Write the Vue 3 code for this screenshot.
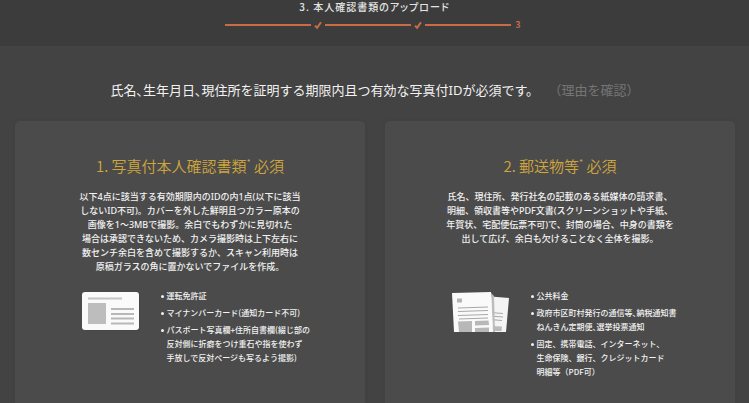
<template>
  <div class="page">
    <!-- Step header -->
    <header class="step-header">
      <h1 class="step-title">3. 本人確認書類のアップロード</h1>
      <div class="steps">
        <template v-for="step in 3" :key="step">
          <span class="step-line" />
          <svg v-if="step < 3" class="step-mark" viewBox="0 0 8 8">
            <path d="M1 4.6 L3.1 6.8 L7 1.2" />
          </svg>
          <span v-else class="step-mark">{{ step }}</span>
        </template>
      </div>
    </header>

    <main class="content">
      <p class="lead">
        <span class="compact">氏名、生年月日、</span>現住所を証明する期限内且つ有効な写真付IDが必須です。
        <a href="#" class="reason-link">（理由を確認）</a>
      </p>

      <div class="cards">
        <section v-for="card in cards" :key="card.title" class="card">
          <h2 class="card-title">{{ card.title }}<sup>*</sup> 必須</h2>
          <p class="card-text">{{ card.text.join('\n') }}</p>

          <div class="card-detail">
            <!-- ID card -->
            <svg v-if="card.icon === 'id'" class="card-icon" viewBox="0 0 58 44">
              <rect x="2" y="4" width="57" height="38" rx="3" fill="#3f3f3f" opacity="0.5" />
              <rect x="0" y="3" width="57" height="38" rx="3" fill="#fafafa" />
              <path d="M6 9.5H40" stroke="#c4c4c4" stroke-width="2" />
              <rect x="6" y="14" width="18" height="21" fill="#bdbdbd" />
              <path d="M29 20H52M29 25H52M29 29.5H52M29 34.5H52" stroke="#b8b8b8" stroke-width="2" />
            </svg>

            <!-- Letters -->
            <svg v-else class="card-icon" viewBox="0 0 58 44">
              <path d="M33 7 L57 9 L54 43 L30 43 Z" fill="#f4f4f4" />
              <path d="M38 23.5L51 24.5M38 27L51 28M38 30.5L50 31.5" stroke="#a8a8a8" />
              <path d="M38 37L50 37.5L49.5 42H38Z" fill="#bbb" />
              <path d="M39 4L41 43H43L42 7Z" fill="#bcbcbc" />
              <path d="M0 4 L39 3 L41 43 L2 43 Z" fill="#fafafa" />
              <path d="M5 9.5H10V13.5H5Z" fill="#b4b4b4" />
              <path d="M6 19L36 18M6 22.5L36 21.5M6 26.5L36 25.5M7 30L36 29" stroke="#a8a8a8" />
              <path d="M6 32.5L20 32V43H7ZM23 32L36.5 31.5L37 36L23 36.5ZM23 39L37 38.5V43H23Z" fill="#b8b8b8" />
            </svg>

            <ul class="card-list">
              <li v-for="item in card.items" :key="item[0]">{{ item.join('\n') }}</li>
            </ul>
          </div>
        </section>
      </div>
    </main>
  </div>
</template>

<script setup>
const cards = [
  {
    title: '1. 写真付本人確認書類',
    icon: 'id',
    text: [
      '以下4点に該当する有効期限内のIDの内1点(以下に該当',
      'しないID不可)。カバーを外した鮮明且つカラー原本の',
      '画像を1〜3MBで撮影。余白でもわずかに見切れた',
      '場合は承認できないため、カメラ撮影時は上下左右に',
      '数センチ余白を含めて撮影するか、スキャン利用時は',
      '原稿ガラスの角に置かないでファイルを作成。'
    ],
    items: [
      ['運転免許証'],
      ['マイナンバーカード(通知カード不可)'],
      ['パスポート写真欄+住所自書欄(綴じ部の', '反対側に折癖をつけ重石や指を使わず', '手放しで反対ページも写るよう撮影)']
    ]
  },
  {
    title: '2. 郵送物等',
    icon: 'mail',
    text: [
      '氏名、現住所、発行社名の記載のある紙媒体の請求書、',
      '明細、領収書等やPDF文書(スクリーンショットや手紙、',
      '年賀状、宅配便伝票不可)で、封筒の場合、中身の書類を',
      '出して広げ、余白も欠けることなく全体を撮影。'
    ],
    items: [
      ['公共料金'],
      ['政府市区町村発行の通信等､納税通知書', 'ねんきん定期便､選挙投票通知'],
      ['固定、携帯電話、インターネット、', '生命保険、銀行、クレジットカード', '明細等（PDF可）']
    ]
  }
]
</script>

<style>
body {
  margin: 0;
  background: #434343;
}
</style>

<style scoped>
.page {
  display: flex;
  flex-direction: column;
  min-height: 100vh;
  color: #f2f2f2;
  background: #434343;
  font-family: 'Noto Sans CJK JP', sans-serif;
}

/* Header */
.step-header {
  padding-bottom: 15px;
  background: #3c3c3c;
}

.step-title {
  margin: 0;
  font-size: 10px;
  font-weight: 500;
  line-height: 14px;
  letter-spacing: 1px;
  text-align: center;
  color: #e4e4e4;
  font-feature-settings: 'palt';
}

.steps {
  display: flex;
  align-items: center;
  justify-content: center;
  gap: 3px;
  margin-top: 4px;
  height: 13px;
  padding-right: 2px;
}

.step-line {
  width: 86px;
  height: 2px;
  background: #c96b45;
}

.step-mark {
  width: 8px;
  font-size: 9px;
  font-weight: 700;
  line-height: 13px;
  text-align: center;
  color: #c96b45;
}

svg.step-mark {
  height: 8px;
  fill: none;
  stroke: #c96b45;
  stroke-width: 2;
}

/* Content */
.content {
  display: flex;
  flex: 1;
  flex-direction: column;
  padding: 34px 14px 0 15px;
}

.lead {
  margin: 0 0 21px;
  font-family: 'Noto Sans', 'Noto Sans CJK JP', sans-serif;
  font-size: 13px;
  line-height: 20px;
  text-align: center;
}

.compact {
  font-feature-settings: 'palt';
}

.reason-link {
  margin-left: 6px;
  color: #757575;
  text-decoration: none;
}

.cards {
  display: grid;
  flex: 1;
  grid-template-columns: repeat(2, minmax(0, 1fr));
  grid-template-rows: auto auto 1fr;
  column-gap: 20px;
}

.card {
  display: grid;
  grid-row: span 3;
  grid-template-rows: subgrid;
  padding-top: 35px;
  background: #4b4b4b;
  border-radius: 5px 5px 0 0;
  box-shadow: 0 0 5px rgba(0, 0, 0, 0.06);
}

.card-title {
  margin: 0 0 14px;
  font-size: 15px;
  font-weight: 350;
  line-height: 20px;
  text-align: center;
  color: #d0a63c;
}

.card-title sup {
  font-size: 9px;
  line-height: 0;
}

.card-text {
  margin: 0 0 15px;
  font-family: 'Noto Sans', 'Noto Sans CJK JP', sans-serif;
  font-size: 9px;
  font-weight: 500;
  line-height: 14px;
  text-align: center;
  white-space: pre-line;
}

.card-detail {
  display: flex;
  align-items: flex-start;
  gap: 21px;
  padding: 0 0 20px 19%;
}

.card-icon {
  flex: none;
  width: 58px;
  height: 44px;
}

.card-list {
  margin: 0;
  padding: 0;
  font-size: 8px;
  font-weight: 500;
  line-height: 14px;
  list-style: none;
  white-space: pre-line;
}

.card-list li {
  position: relative;
  margin-bottom: 3px;
  padding-left: 6px;
}

.card-list li::before {
  position: absolute;
  top: 6px;
  left: 0;
  width: 3px;
  height: 3px;
  content: '';
  background: #f2f2f2;
  border-radius: 50%;
}
</style>
